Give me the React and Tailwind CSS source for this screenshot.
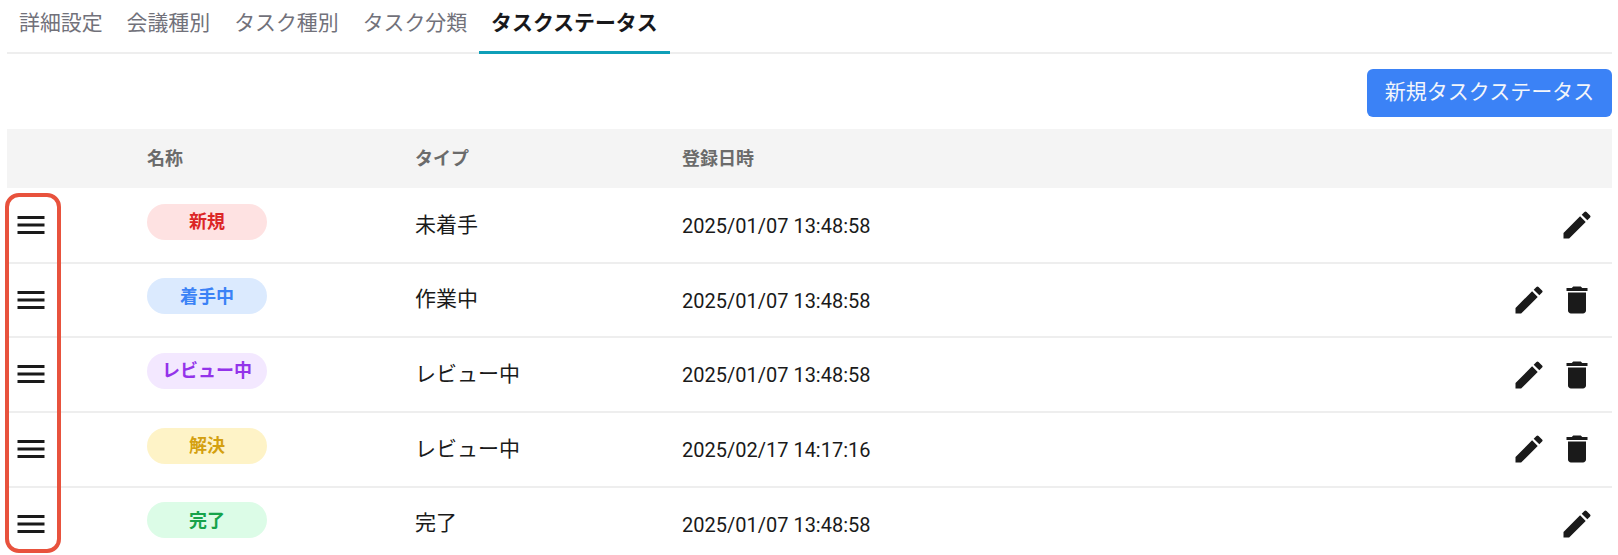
import { MdMenu, MdEdit, MdDelete } from 'react-icons/md'

const rows = [
    { name: '新規', pill: 'bg-[#fee2e2] text-[#dc2626]', type: '未着手', date: '2025/01/07 13:48:58', del: false },
    { name: '着手中', pill: 'bg-[#dbeafe] text-[#3b82f6]', type: '作業中', date: '2025/01/07 13:48:58', del: true },
    { name: 'レビュー中', pill: 'bg-[#f3e8ff] text-[#9333ea]', type: 'レビュー中', date: '2025/01/07 13:48:58', del: true },
    { name: '解決', pill: 'bg-[#fef3c7] text-[#d4a00f]', type: 'レビュー中', date: '2025/02/17 14:17:16', del: true },
    { name: '完了', pill: 'bg-[#dcfce7] text-[#16a34a]', type: '完了', date: '2025/01/07 13:48:58', del: false },
]

const tabs = ['詳細設定', '会議種別', 'タスク種別', 'タスク分類']

const App = () => {
    return (
        <div className="relative h-[555px] overflow-hidden bg-white pl-[7px] pr-[6px] font-['Roboto','Noto_Sans_CJK_JP',sans-serif] text-[#1a1a1a]">
            {/* tabs */}
            <div className="flex h-[54px] border-b-2 border-[#eeeeee]">
                {tabs.map((t) => (
                    <div key={t} className="px-3 pt-[8px] text-[20.9px] leading-[30px] text-[#71717a]">{t}</div>
                ))}
                <div className="-mb-[2px] border-b-[3px] border-[#0e9fb8] px-3 pt-[8px] text-[20.9px] font-bold leading-[30px] text-[#18181b]">タスクステータス</div>
            </div>

            <div className="flex h-[75px] items-start justify-end pt-[15px]">
                <button className="h-[48px] w-[245px] rounded-md bg-[#3b82f6] text-[21px] text-[#f3f6fb]">新規タスクステータス</button>
            </div>

            {/* table */}
            <div className="mb-[1px] grid h-[59px] grid-cols-[140px_268px_267px_1fr] items-center bg-[#f4f4f4] text-[18px] font-semibold text-[#6b6b6b]">
                <div></div>
                <div>名称</div>
                <div>タイプ</div>
                <div>登録日時</div>
            </div>

            {rows.map((r, i) => (
                <div key={i} className="grid h-[74.7px] grid-cols-[140px_268px_267px_1fr] border-b-2 border-[#eeeeee] last:border-b-0">
                    <div className="flex items-start pl-[6px] pt-[18px]">
                        <MdMenu size={36} />
                    </div>
                    <div className="pt-[14.6px]">
                        <div className={`flex h-[36px] w-[120px] items-center justify-center rounded-full text-[18px] font-semibold ${r.pill}`}>{r.name}</div>
                    </div>
                    <div className="flex items-center text-[21px]">{r.type}</div>
                    <div className="flex items-center justify-between pr-[17px]">
                        <span className="pt-[1px] text-[20px]">{r.date}</span>
                        <div className="flex items-center gap-[12px]">
                            <MdEdit size={36} />
                            {r.del && <MdDelete size={36} />}
                        </div>
                    </div>
                </div>
            ))}

            {/* red annotation frame */}
            <div className="absolute left-[5px] top-[193px] h-[360px] w-[56px] rounded-[14px] border-[4px] border-[#e8523d]"></div>
        </div>
    );
}

export default App
